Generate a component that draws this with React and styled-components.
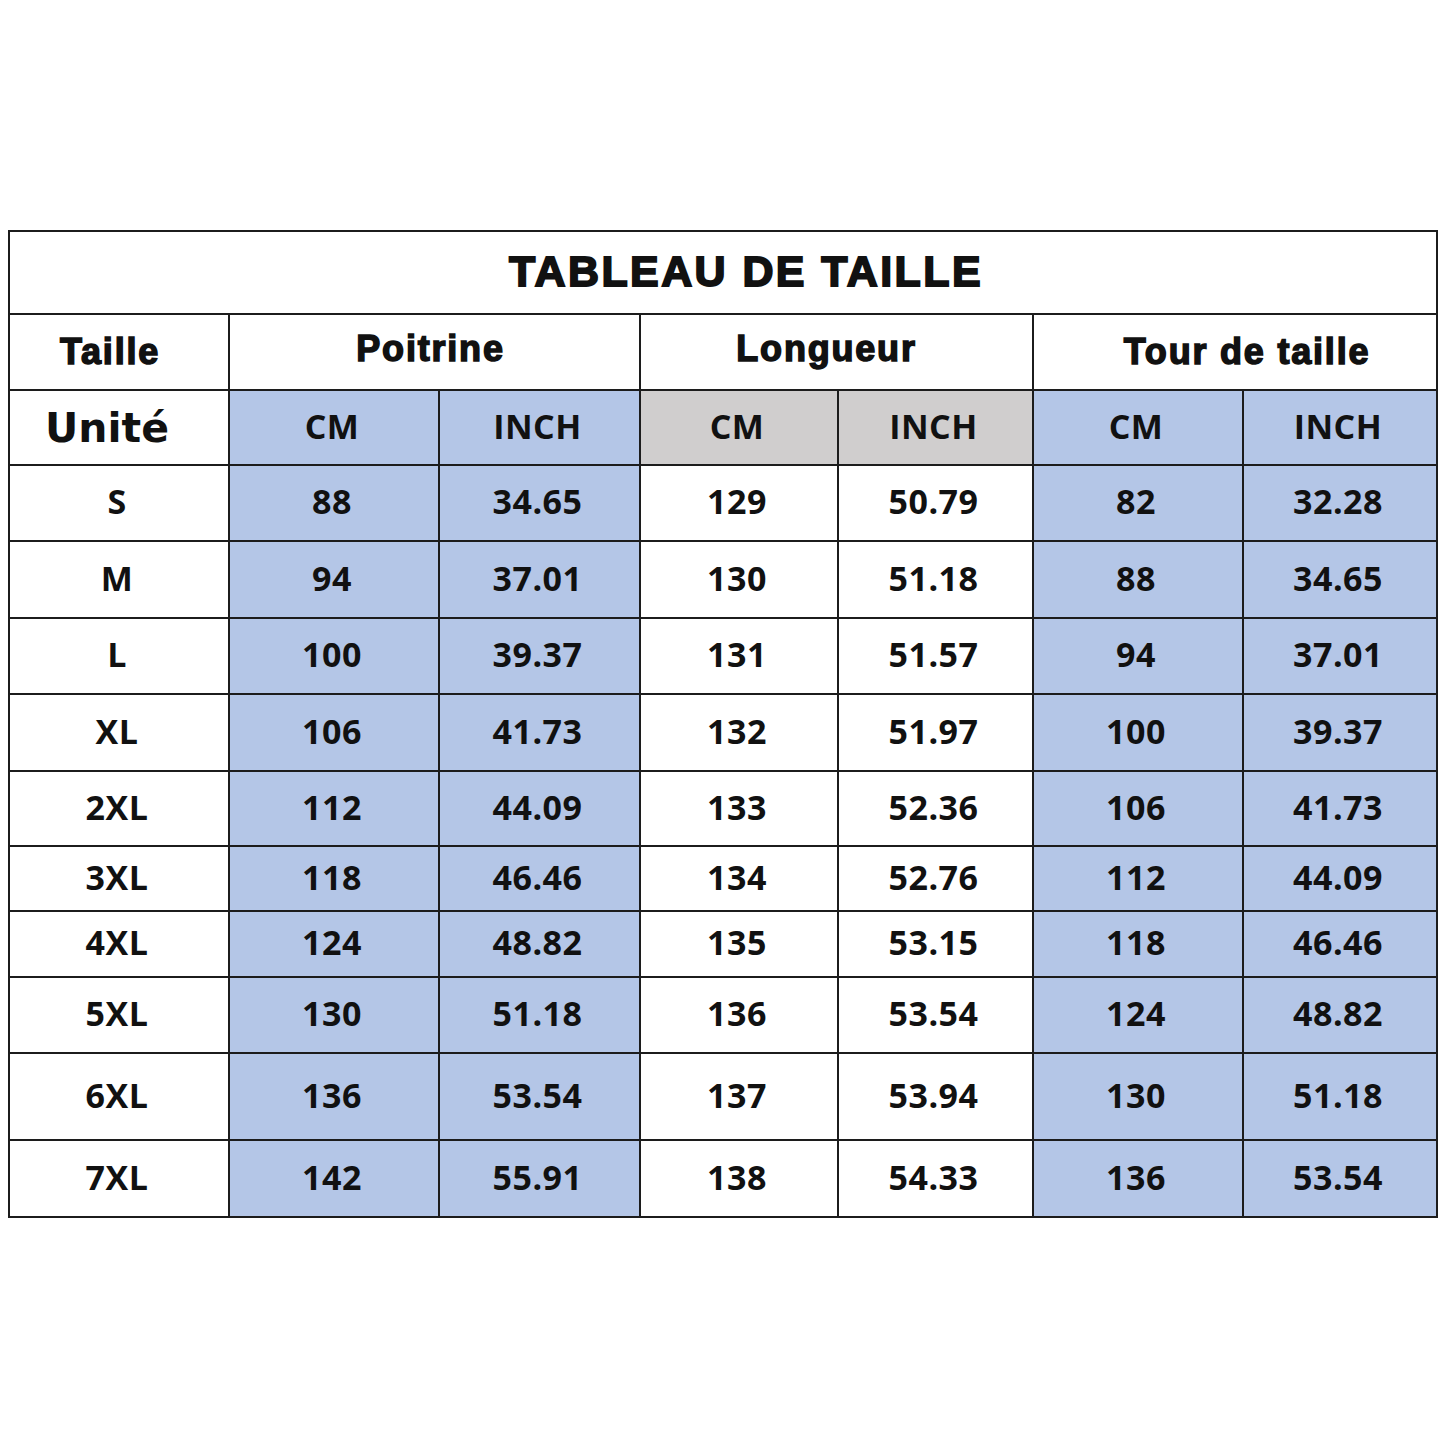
import React from 'react';
import styled, { createGlobalStyle } from 'styled-components';

const GlobalStyle = createGlobalStyle`
  html, body {
    margin: 0;
    padding: 0;
    background: #ffffff;
  }
`;

const colors = {
  blue: '#b4c6e7',
  grey: '#d0cece',
  line: '#1c1c1c',
  text: '#111111'
};

const columns = [220, 210, 201, 198, 195, 210, 194];

const rows = [
  { size: 'S', h: 76, values: ['88', '34.65', '129', '50.79', '82', '32.28'] },
  { size: 'M', h: 77, values: ['94', '37.01', '130', '51.18', '88', '34.65'] },
  { size: 'L', h: 76, values: ['100', '39.37', '131', '51.57', '94', '37.01'] },
  { size: 'XL', h: 77, values: ['106', '41.73', '132', '51.97', '100', '39.37'] },
  { size: '2XL', h: 75, values: ['112', '44.09', '133', '52.36', '106', '41.73'] },
  { size: '3XL', h: 65, values: ['118', '46.46', '134', '52.76', '112', '44.09'] },
  { size: '4XL', h: 66, values: ['124', '48.82', '135', '53.15', '118', '46.46'] },
  { size: '5XL', h: 76, values: ['130', '51.18', '136', '53.54', '124', '48.82'] },
  { size: '6XL', h: 87, values: ['136', '53.54', '137', '53.94', '130', '51.18'] },
  { size: '7XL', h: 77, values: ['142', '55.91', '138', '54.33', '136', '53.54'] }
];

// columns 1,2 and 5,6 of the value area are blue, 3,4 are white (grey only in the unit row)
const valueTone = i => (i === 2 || i === 3 ? 'white' : 'blue');

const App = () => (
  <Page>
    <GlobalStyle />
    <Table>
      <colgroup>
        {columns.map((w, i) => (
          <col key={i} style={{ width: w }} />
        ))}
      </colgroup>
      <tbody>
        <Row $h={83}>
          <TitleCell colSpan={7}>TABLEAU DE TAILLE</TitleCell>
        </Row>
        <Row $h={76}>
          <HeadCell $shift={-9}>Taille</HeadCell>
          <HeadCell colSpan={2} $lift $shift={-4}>Poitrine</HeadCell>
          <HeadCell colSpan={2} $lift $shift={-10}>Longueur</HeadCell>
          <HeadCell colSpan={2} $shift={12}>Tour de taille</HeadCell>
        </Row>
        <Row $h={75}>
          <UnitLabel>Unité</UnitLabel>
          <Cell $tone='blue'>CM</Cell>
          <Cell $tone='blue'>INCH</Cell>
          <Cell $tone='grey'>CM</Cell>
          <Cell $tone='grey'>INCH</Cell>
          <Cell $tone='blue'>CM</Cell>
          <Cell $tone='blue'>INCH</Cell>
        </Row>
        {rows.map(r => (
          <Row key={r.size} $h={r.h}>
            <Cell $tone='white'>{r.size}</Cell>
            {r.values.map((v, i) => (
              <Cell key={i} $tone={valueTone(i)}>
                {v}
              </Cell>
            ))}
          </Row>
        ))}
      </tbody>
    </Table>
  </Page>
);

const Page = styled.div`
  width: 1445px;
  height: 1445px;
  padding: 230px 0 0 8px;
  box-sizing: border-box;
`;

const Table = styled.table`
  width: 1429px;
  table-layout: fixed;
  border-collapse: collapse;
  border: 2px solid ${colors.line};
`;

const Row = styled.tr`
  height: ${p => p.$h}px;
`;

const BaseCell = styled.td`
  border: 2px solid ${colors.line};
  padding: 0;
  text-align: center;
  vertical-align: middle;
  color: ${colors.text};
  white-space: nowrap;
  overflow: hidden;
`;

const TitleCell = styled(BaseCell)`
  font-family: 'Liberation Sans', Arial, sans-serif;
  font-weight: 700;
  font-size: 43px;
  letter-spacing: 2.4px;
  -webkit-text-stroke: 1.8px ${colors.text};
  padding: 0 0 2px 46px;
`;

const HeadCell = styled(BaseCell)`
  font-family: 'Liberation Sans', Arial, sans-serif;
  font-weight: 700;
  font-size: 36px;
  letter-spacing: 1.8px;
  -webkit-text-stroke: 1.5px ${colors.text};
  padding-bottom: ${p => (p.$lift ? '6px' : '0')};
  padding-left: ${p => (p.$shift > 0 ? p.$shift * 2 : 0)}px;
  padding-right: ${p => (p.$shift < 0 ? -p.$shift * 2 : 0)}px;
`;

const UnitLabel = styled(BaseCell)`
  font-family: 'DejaVu Sans', Verdana, sans-serif;
  font-weight: 700;
  font-size: 41px;
  padding-right: 24px;
`;

const Cell = styled(BaseCell)`
  font-family: 'Open Sans', sans-serif;
  font-weight: 700;
  font-size: 34px;
  letter-spacing: 0.5px;
  padding-right: 4px;
  padding-bottom: 4px;
  background: ${p =>
    p.$tone === 'blue' ? colors.blue : p.$tone === 'grey' ? colors.grey : '#ffffff'};
`;

export default App;
